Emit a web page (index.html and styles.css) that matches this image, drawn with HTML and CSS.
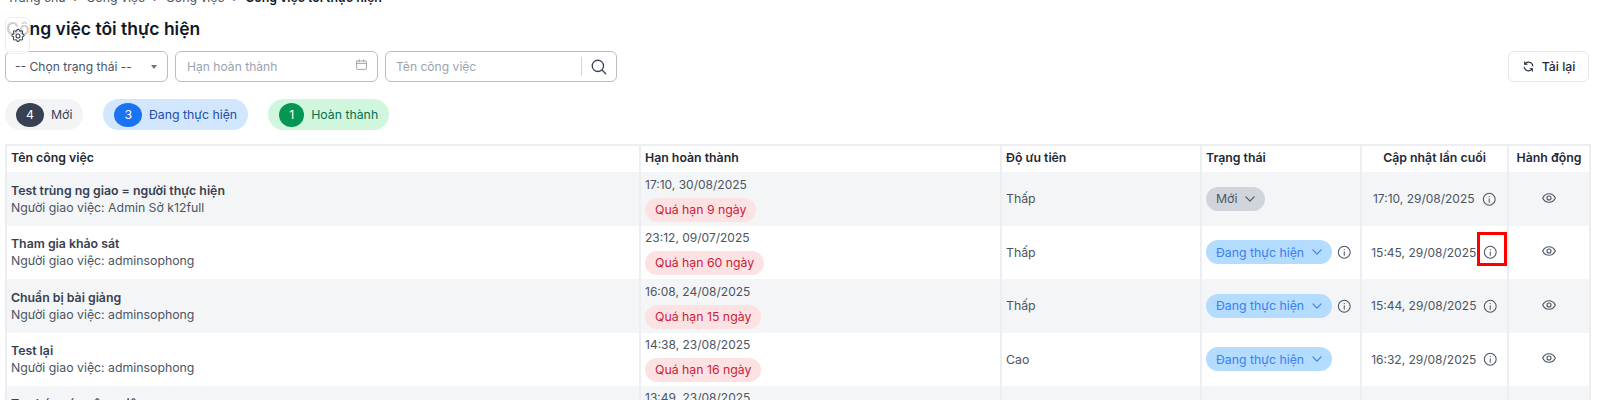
FILE: index.html
```html
<!DOCTYPE html>
<html lang="vi">
<head>
<meta charset="utf-8">
<title>Công việc tôi thực hiện</title>
<link rel="stylesheet" href="styles.css">
</head>
<body>
<svg class="defs" width="0" height="0" aria-hidden="true">
  <symbol id="i-info" viewBox="0 0 24 24"><circle cx="12" cy="12" r="9.800" fill="none" stroke="currentColor" stroke-width="1.700"/><path d="M12 11v6" fill="none" stroke="currentColor" stroke-width="1.700" stroke-linecap="round"/><circle cx="12" cy="7.600" r="1.100" fill="currentColor"/></symbol>
  <symbol id="i-eye" viewBox="0 0 24 24"><path d="M2.500 12C4.500 7.800 8 5.600 12 5.600s7.500 2.200 9.500 6.400c-2 4.200-5.500 6.400-9.500 6.400S4.500 16.200 2.500 12Z" fill="none" stroke="currentColor" stroke-width="1.700" stroke-linejoin="round"/><circle cx="12" cy="12" r="3" fill="none" stroke="currentColor" stroke-width="1.700"/></symbol>
  <symbol id="i-chev" viewBox="0 0 24 24"><path d="m5 8.500 7 7 7-7" fill="none" stroke="currentColor" stroke-width="2" stroke-linecap="round" stroke-linejoin="round"/></symbol>
</svg>

<button class="gear" type="button" aria-label="Cài đặt">
  <svg viewBox="0 0 24 24" width="16" height="16"><path d="M10.300 3.300c.4-1.700 3-1.700 3.400 0a1.750 1.750 0 0 0 2.600 1.100c1.500-.9 3.300.9 2.400 2.400a1.750 1.750 0 0 0 1.100 2.600c1.700.4 1.700 3 0 3.400a1.750 1.750 0 0 0-1.100 2.600c.9 1.500-.9 3.300-2.400 2.400a1.750 1.750 0 0 0-2.600 1.100c-.4 1.700-3 1.700-3.400 0a1.750 1.750 0 0 0-2.600-1.100c-1.500.9-3.300-.9-2.400-2.400a1.750 1.750 0 0 0-1.100-2.600c-1.700-.4-1.700-3 0-3.400a1.750 1.750 0 0 0 1.100-2.600c-.9-1.500.9-3.300 2.400-2.400a1.750 1.750 0 0 0 2.600-1.100Z" fill="none" stroke="currentColor" stroke-width="1.600"/><circle cx="12" cy="12" r="3" fill="none" stroke="currentColor" stroke-width="1.600"/></svg>
</button>

<main class="page">
  <nav class="crumbs"><span>Trang chủ</span><i>›</i><span>Công việc</span><i>›</i><span>Công việc</span><i>›</i><b>Công việc tôi thực hiện</b></nav>
  <h1 class="title">Công việc tôi thực hiện</h1>

  <div class="filters">
    <div class="field field-select"><span>-- Chọn trạng thái --</span><span class="caret"></span></div>
    <div class="field field-date"><span class="ph">Hạn hoàn thành</span>
      <svg class="cal" viewBox="0 0 24 24" width="13" height="13"><path d="M4 5.500h16a1 1 0 0 1 1 1V20a1 1 0 0 1-1 1H4a1 1 0 0 1-1-1V6.500a1 1 0 0 1 1-1ZM3 10h18M8 3v4M16 3v4" fill="none" stroke="currentColor" stroke-width="1.800" stroke-linecap="round"/></svg>
    </div>
    <div class="field field-search"><span class="ph">Tên công việc</span>
      <span class="search-btn"><svg viewBox="0 0 24 24" width="18" height="18"><circle cx="10.500" cy="10.500" r="7.500" fill="none" stroke="currentColor" stroke-width="1.700"/><path d="m16 16 5 5" fill="none" stroke="currentColor" stroke-width="1.700" stroke-linecap="round"/></svg></span>
    </div>
    <button class="reload" type="button">
      <svg viewBox="0 0 24 24" width="13" height="13"><path d="M20 11a8 8 0 0 0-14.500-3.500M4 13a8 8 0 0 0 14.500 3.500" fill="none" stroke="currentColor" stroke-width="2" stroke-linecap="round"/><path d="M5 3.500v4.300h4.300M19 20.500v-4.300h-4.300" fill="none" stroke="currentColor" stroke-width="2" stroke-linecap="round" stroke-linejoin="round"/></svg>
      Tải lại
    </button>
  </div>

  <div class="tabs">
    <div class="tab tab-new"><span class="num">4</span>Mới</div>
    <div class="tab tab-doing"><span class="num">3</span>Đang thực hiện</div>
    <div class="tab tab-done"><span class="num">1</span>Hoàn thành</div>
  </div>

  <table class="tasks">
    <colgroup><col class="c1"><col class="c2"><col class="c3"><col class="c4"><col class="c5"><col class="c6"></colgroup>
    <thead>
      <tr><th>Tên công việc</th><th>Hạn hoàn thành</th><th>Độ ưu tiên</th><th>Trạng thái</th><th class="center">Cập nhật lần cuối</th><th class="center">Hành động</th></tr>
    </thead>
    <tbody>
      <tr>
        <td><div class="name">Test trùng ng giao = người thực hiện</div><div class="who">Người giao việc: Admin Sở k12full</div></td>
        <td><div class="due">17:10, 30/08/2025</div><span class="late">Quá hạn 9 ngày</span></td>
        <td>Thấp</td>
        <td><div class="st"><span class="pill pill-new">Mới<svg class="chev"><use href="#i-chev"/></svg></span></div></td>
        <td class="center"><div class="upd">17:10, 29/08/2025<svg class="info"><use href="#i-info"/></svg></div></td>
        <td class="center"><svg class="eye"><use href="#i-eye"/></svg></td>
      </tr>
      <tr>
        <td><div class="name">Tham gia khảo sát</div><div class="who">Người giao việc: adminsophong</div></td>
        <td><div class="due">23:12, 09/07/2025</div><span class="late">Quá hạn 60 ngày</span></td>
        <td>Thấp</td>
        <td><div class="st"><span class="pill pill-doing">Đang thực hiện<svg class="chev"><use href="#i-chev"/></svg></span><svg class="info"><use href="#i-info"/></svg></div></td>
        <td class="center"><div class="upd">15:45, 29/08/2025<svg class="info"><use href="#i-info"/></svg><span class="mark"></span></div></td>
        <td class="center"><svg class="eye"><use href="#i-eye"/></svg></td>
      </tr>
      <tr>
        <td><div class="name">Chuẩn bị bài giảng</div><div class="who">Người giao việc: adminsophong</div></td>
        <td><div class="due">16:08, 24/08/2025</div><span class="late">Quá hạn 15 ngày</span></td>
        <td>Thấp</td>
        <td><div class="st"><span class="pill pill-doing">Đang thực hiện<svg class="chev"><use href="#i-chev"/></svg></span><svg class="info"><use href="#i-info"/></svg></div></td>
        <td class="center"><div class="upd">15:44, 29/08/2025<svg class="info"><use href="#i-info"/></svg></div></td>
        <td class="center"><svg class="eye"><use href="#i-eye"/></svg></td>
      </tr>
      <tr>
        <td><div class="name">Test lại</div><div class="who">Người giao việc: adminsophong</div></td>
        <td><div class="due">14:38, 23/08/2025</div><span class="late">Quá hạn 16 ngày</span></td>
        <td>Cao</td>
        <td><div class="st"><span class="pill pill-doing">Đang thực hiện<svg class="chev"><use href="#i-chev"/></svg></span></div></td>
        <td class="center"><div class="upd">16:32, 29/08/2025<svg class="info"><use href="#i-info"/></svg></div></td>
        <td class="center"><svg class="eye"><use href="#i-eye"/></svg></td>
      </tr>
      <tr>
        <td><div class="name">Tạo báo cáo công việc</div><div class="who">Người giao việc: adminsophong</div></td>
        <td><div class="due">13:49, 23/08/2025</div><span class="late">Quá hạn 16 ngày</span></td>
        <td>Thấp</td>
        <td><div class="st"><span class="pill pill-doing">Đang thực hiện<svg class="chev"><use href="#i-chev"/></svg></span></div></td>
        <td class="center"><div class="upd">13:49, 29/08/2025<svg class="info"><use href="#i-info"/></svg></div></td>
        <td class="center"><svg class="eye"><use href="#i-eye"/></svg></td>
      </tr>
    </tbody>
  </table>
</main>
</body>
</html>
```
FILE: styles.css
```css
* { box-sizing: border-box; }
html, body { margin: 0; height: 400px; overflow: hidden; background: #fff; }
body { font-family: Inter, "Noto Sans", sans-serif; font-size: 12.300px; color: #374151; position: relative; }
.defs { position: absolute; }
.page { padding: 0 11px 0 5px; }

.crumbs { display: flex; align-items: center; gap: 8px; height: 16px; margin-top: -11px; padding-left: 2px; font-size: 12.300px; color: #4b5563; }
.crumbs b { font-weight: 600; color: #111827; }
.crumbs i { font-style: normal; }

.title { margin: 10px 0 0; height: 28px; line-height: 28px; font-size: 17.500px; font-weight: 600; color: #111827; padding-left: 1px; }

.gear { position: absolute; left: 5px; top: 17px; width: 25px; height: 37px; padding: 0; display: flex; align-items: center; justify-content: center; background: rgba(255,255,255,.8); border: 1px solid #eceef1; border-radius: 6px; color: #374151; }

.filters { display: flex; gap: 7px; margin-top: 8px; height: 31px; }
.field { display: flex; align-items: center; height: 31px; border: 1px solid #b9bdc4; border-radius: 6px; background: #fff; font-size: 12.100px; }
.field-select { width: 163px; padding: 0 10px 0 9px; justify-content: space-between; color: #4b5563; }
.caret { width: 0; height: 0; border-left: 3px solid transparent; border-right: 3px solid transparent; border-top: 4px solid #6b7280; }
.field-date { width: 203px; padding: 0 9px 0 11px; justify-content: space-between; }
.field-search { width: 232px; padding: 0 8px 0 10px; justify-content: space-between; }
.ph { color: #9ca3af; }
.cal { color: #9ca3af; margin-top: -4px; }
.search-btn { display: flex; align-items: center; height: 19px; padding-left: 8px; border-left: 1px solid #d1d5db; color: #374151; }
.reload { margin-left: auto; width: 81px; height: 31px; display: flex; align-items: center; justify-content: center; gap: 7px; padding: 0; background: #fff; border: 1px solid #e5e7eb; border-radius: 6px; font: 500 12.300px Inter, sans-serif; color: #1f2937; }

.tabs { display: flex; gap: 20px; margin-top: 17px; }
.tab { display: flex; align-items: center; gap: 7px; height: 31px; padding: 0 11px; border-radius: 16px; }
.num { display: flex; align-items: center; justify-content: center; height: 24px; padding: 0 10px; border-radius: 50%; color: #fff; }
.tab-new { background: #f3f4f6; color: #374151; }
.tab-new .num { background: #374151; }
.tab-doing { background: #d2e6fe; color: #1e4fa8; }
.tab-doing .num { background: #1a73f0; }
.tab-done { background: #d0f7de; color: #03714f; }
.tab-done .num { background: #059652; }

.tasks { width: 1584px; margin-top: 14px; border-collapse: collapse; table-layout: fixed; border: 2px solid #eceef1; }
.c1 { width: 634px; } .c2 { width: 361px; } .c3 { width: 200px; } .c4 { width: 160px; } .c5 { width: 147px; } .c6 { width: 82px; }
.tasks th, .tasks td { border-left: 2px solid #eceef1; border-right: 2px solid #eceef1; padding: 0 4px; vertical-align: middle; text-align: left; }
.tasks th { height: 27px; padding-bottom: 3px; font-weight: 600; color: #1f2937; }
.tasks td { height: 53.500px; color: #4b5563; }
.tasks tbody tr:nth-child(odd) { background: #f4f5f7; }
.tasks .center { text-align: center; }

.name { font-weight: 600; color: #374151; line-height: 17px; }
.who { line-height: 17px; color: #4b5563; }
.due { line-height: 16px; margin-top: 1px; font-size: 12px; }
.late { display: inline-block; height: 24px; line-height: 24px; padding: 0 10px; margin-top: 5px; border-radius: 12px; background: #fde2e3; color: #c81e3a; }

.st { display: flex; align-items: center; gap: 5px; }
.pill { display: inline-flex; align-items: center; gap: 6px; height: 24px; padding: 0 8px 0 10px; border-radius: 12px; white-space: nowrap; }
.pill-new { background: #d1d5db; color: #4b5563; }
.pill-doing { background: #b3dcff; color: #3b7ff0; }
.chev { width: 14px; height: 14px; flex: none; }
.info { width: 14.500px; height: 14.500px; color: #4b5563; flex: none; }
.upd { position: relative; display: flex; align-items: center; justify-content: center; gap: 7px; font-size: 12px; white-space: nowrap; }
.eye { width: 16px; height: 16px; color: #4b5563; display: inline-block; vertical-align: middle; margin-top: -4px; }
.mark { position: absolute; right: -4px; top: -13px; width: 30px; height: 34px; border: 3px solid #f00; }
```
